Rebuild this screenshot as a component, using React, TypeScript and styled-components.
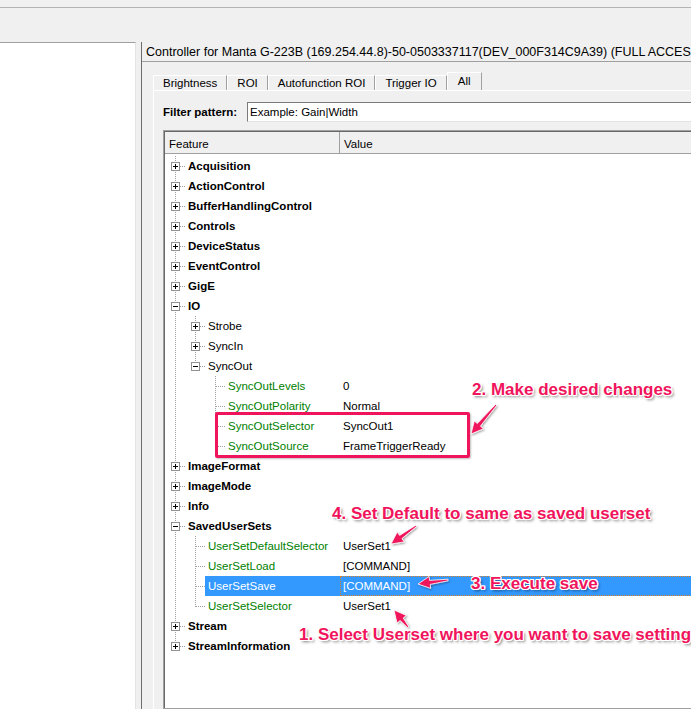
import React from 'react';
import styled, { createGlobalStyle, css } from 'styled-components';

const GlobalStyle = createGlobalStyle`
  html, body { margin: 0; padding: 0; background: #f0f0f0; overflow: hidden; }
  * { box-sizing: border-box; }
`;

const Window = styled.div`
  position: relative;
  width: 100vw;
  height: 100vh;
  overflow: hidden;
  display: flex;
  flex-direction: column;
  background: #f0f0f0;
  font-family: "Liberation Sans", Arial, sans-serif;
  font-size: 11.5px;
  color: #000;
`;

const TopStrip = styled.div`
  flex: none;
  height: 8px;
  border-bottom: 1px solid #b4b4b4;
`;

const Toolbar = styled.div`
  flex: none;
  height: 34px;
`;

const Main = styled.div`
  flex: 1;
  min-height: 0;
  display: flex;
`;

const LeftPane = styled.div`
  flex: none;
  width: 136px;
  background: #fff;
  border-top: 1px solid #a0a0a0;
  border-right: 1px solid #e3e3e3;
`;

const Splitter = styled.div`
  flex: none;
  width: 5px;
`;

const RightPane = styled.div`
  flex: 1;
  min-width: 0;
  overflow: hidden;
  display: flex;
  flex-direction: column;
  border-left: 1px solid #6d6d6d;
`;

const TitleBar = styled.div`
  flex: none;
  height: 20px;
  display: flex;
  align-items: center;
  padding-left: 4px;
  font-size: 12.5px;
  white-space: nowrap;
  border-bottom: 1px solid #a0a0a0;
`;

const TabStrip = styled.div`
  flex: none;
  display: flex;
  align-items: flex-end;
  height: 18px;
  margin: 10px 0 0 11px;
`;

const Tab = styled.div<{ $active?: boolean }>`
  display: flex;
  align-items: center;
  padding: 0 9px;
  white-space: nowrap;
  border-left: 1px solid #fff;
  border-top: 1px solid #fff;
  border-right: 1px solid #a0a0a0;
  height: 15px;
  ${(p) =>
    p.$active &&
    css`
      height: 18px;
      padding: 0 10px 2px;
      background: #f0f0f0;
    `}
`;

const TabPanel = styled.div`
  flex: 1;
  width: 560px;
  margin-left: 11px;
  display: flex;
  flex-direction: column;
  border-top: 1px solid #fff;
  border-left: 1px solid #fff;
  padding: 11px 0 0 9px;
`;

const FilterRow = styled.div`
  flex: none;
  display: flex;
  align-items: center;
  height: 20px;
`;

const FilterLabel = styled.label`
  flex: none;
  width: 84px;
  font-weight: bold;
`;

const FilterInput = styled.input`
  flex: 1;
  height: 20px;
  margin: 0;
  padding: 0 0 0 2px;
  font: inherit;
  color: #000;
  background: #fff;
  border-top: 1px solid #7a7a7a;
  border-left: 1px solid #7a7a7a;
  border-right: 1px solid #e3e3e3;
  border-bottom: 1px solid #e3e3e3;
  outline: none;
`;

const TreeView = styled.div`
  flex: 1;
  margin-top: 8px;
  border: 1px solid #a0a0a0;
  background: #fff;
  display: flex;
  flex-direction: column;
`;

const TreeInner = styled.div`
  flex: 1;
  border-top: 1px solid #696969;
  border-left: 1px solid #696969;
  display: flex;
  flex-direction: column;
`;

const Header = styled.div`
  flex: none;
  display: flex;
  height: 22px;
  background: #f0f0f0;
  border-bottom: 1px solid #a0a0a0;
`;

const HeaderCell = styled.div<{ $w?: number }>`
  display: flex;
  align-items: center;
  padding: 2px 0 0 4px;
  ${(p) => (p.$w ? css`width: ${p.$w}px; flex: none; border-right: 1px solid #a0a0a0;` : css`flex: 1;`)}
`;

const Body = styled.div`
  padding-top: 2px;
`;

const Row = styled.div`
  display: flex;
  height: 20px;
`;

const FeatureCell = styled.div`
  flex: none;
  width: 175px;
  display: flex;
  overflow: hidden;
  white-space: nowrap;
`;

const Label = styled.div<{ $variant: 'root' | 'group' | 'feature'; $selected?: boolean }>`
  flex: 1;
  min-width: 0;
  display: flex;
  align-items: center;
  padding: 0 3px;
  font-weight: ${(p) => (p.$variant === 'root' ? 'bold' : 'normal')};
  color: ${(p) => (p.$variant === 'feature' ? '#008000' : '#000')};
  ${(p) =>
    p.$selected &&
    css`
      background: #3399ff;
      color: #fff;
    `}
`;

const ValueCell = styled.div<{ $selected?: boolean }>`
  flex: 1;
  display: flex;
  align-items: center;
  padding-left: 3px;
  white-space: nowrap;
  ${(p) =>
    p.$selected &&
    css`
      background: #3399ff;
      color: #fff;
      outline: 1px dotted #d9822b;
      outline-offset: -1px;
    `}
`;

const Guides = styled.svg`
  flex: none;
  display: block;
`;

const Overlay = styled.svg`
  position: absolute;
  left: 0;
  top: 0;
  width: 100%;
  height: 100%;
  pointer-events: none;
`;

const HighlightBox = styled.div`
  position: absolute;
  left: 215px;
  top: 412px;
  width: 255px;
  height: 46px;
  border: 3px solid #f0145c;
  border-radius: 2px;
  box-shadow: 1px 1px 2px rgba(0, 0, 0, 0.25);
  pointer-events: none;
`;

const Note = styled.div<{ $x: number; $y: number }>`
  position: absolute;
  left: ${(p) => p.$x}px;
  top: ${(p) => p.$y}px;
  font-family: "Liberation Sans", Arial, sans-serif;
  font-weight: bold;
  font-size: 17px;
  line-height: 20px;
  white-space: nowrap;
  color: #f0145c;
  text-shadow: -1px -1px 0 #fff, 1px -1px 0 #fff, -1px 1px 0 #fff, 1px 1px 0 #fff, 0 -1px 0 #fff,
    0 1px 0 #fff, -1px 0 0 #fff, 1px 0 0 #fff, 2px 2px 3px rgba(0, 0, 0, 0.55);
`;

type TNode = {
  name: string;
  value?: string;
  collapsed?: boolean;
  children?: TNode[];
  selected?: boolean;
};

const tree: TNode[] = [
  { name: 'Acquisition', collapsed: true },
  { name: 'ActionControl', collapsed: true },
  { name: 'BufferHandlingControl', collapsed: true },
  { name: 'Controls', collapsed: true },
  { name: 'DeviceStatus', collapsed: true },
  { name: 'EventControl', collapsed: true },
  { name: 'GigE', collapsed: true },
  {
    name: 'IO',
    children: [
      { name: 'Strobe', collapsed: true },
      { name: 'SyncIn', collapsed: true },
      {
        name: 'SyncOut',
        children: [
          { name: 'SyncOutLevels', value: '0' },
          { name: 'SyncOutPolarity', value: 'Normal' },
          { name: 'SyncOutSelector', value: 'SyncOut1' },
          { name: 'SyncOutSource', value: 'FrameTriggerReady' },
        ],
      },
    ],
  },
  { name: 'ImageFormat', collapsed: true },
  { name: 'ImageMode', collapsed: true },
  { name: 'Info', collapsed: true },
  {
    name: 'SavedUserSets',
    children: [
      { name: 'UserSetDefaultSelector', value: 'UserSet1' },
      { name: 'UserSetLoad', value: '[COMMAND]' },
      { name: 'UserSetSave', value: '[COMMAND]', selected: true },
      { name: 'UserSetSelector', value: 'UserSet1' },
    ],
  },
  { name: 'Stream', collapsed: true },
  { name: 'StreamInformation', collapsed: true },
];

type FlatRow = { node: TNode; depth: number; ancestors: boolean[]; hasNext: boolean };

function flatten(nodes: TNode[], depth: number, ancestors: boolean[]): FlatRow[] {
  const out: FlatRow[] = [];
  nodes.forEach((node, i) => {
    const hasNext = i < nodes.length - 1;
    out.push({ node, depth, ancestors, hasNext });
    if (node.children) out.push(...flatten(node.children, depth + 1, [...ancestors, hasNext]));
  });
  return out;
}

const LINE = '#a0a0a0';

function TreeGuides({ row }: { row: FlatRow }) {
  const w = 20 * (row.depth + 1);
  const cx = 20 * row.depth + 10.5;
  const expandable = !!row.node.collapsed || !!row.node.children;
  return (
    <Guides width={w} height={20} shapeRendering="crispEdges">
      {row.ancestors.map((has, k) =>
        has ? (
          <line key={k} x1={20 * k + 10.5} y1={0} x2={20 * k + 10.5} y2={20} stroke={LINE} strokeDasharray="1 1" />
        ) : null
      )}
      <line x1={cx} y1={0} x2={cx} y2={row.hasNext ? 20 : 11} stroke={LINE} strokeDasharray="1 1" />
      <line x1={expandable ? cx + 4.5 : cx + 0.5} y1={10.5} x2={w} y2={10.5} stroke={LINE} strokeDasharray="1 1" />
      {expandable && (
        <g>
          <rect x={cx - 4} y={6.5} width={8} height={8} fill="#fff" stroke="#919191" />
          <line x1={cx - 2.5} y1={10.5} x2={cx + 2.5} y2={10.5} stroke="#000" />
          {row.node.collapsed && <line x1={cx} y1={8} x2={cx} y2={13} stroke="#000" />}
        </g>
      )}
    </Guides>
  );
}

function arrowPoints(x1: number, y1: number, x2: number, y2: number) {
  const dx = x2 - x1;
  const dy = y2 - y1;
  const L = Math.hypot(dx, dy);
  const ux = dx / L;
  const uy = dy / L;
  const px = -uy;
  const py = ux;
  const head = 12;
  const hw = 6;
  const tw = 0.8;
  const sw = 2;
  const bx = x2 - ux * head;
  const by = y2 - uy * head;
  const pts = [
    [x1 + px * tw, y1 + py * tw],
    [bx + px * sw, by + py * sw],
    [bx + px * hw, by + py * hw],
    [x2, y2],
    [bx - px * hw, by - py * hw],
    [bx - px * sw, by - py * sw],
    [x1 - px * tw, y1 - py * tw],
  ];
  return pts.map((p) => `${p[0].toFixed(1)},${p[1].toFixed(1)}`).join(' ');
}

const arrows: [number, number, number, number][] = [
  [496, 405, 471, 434],
  [416, 526, 391, 544],
  [448, 580, 418, 584],
  [408, 627, 394, 610],
];

export default function App() {
  const rows = flatten(tree, 0, []);
  return (
    <>
      <GlobalStyle />
      <Window>
        <TopStrip />
        <Toolbar />
        <Main>
          <LeftPane />
          <Splitter />
          <RightPane>
            <TitleBar>Controller for Manta G-223B (169.254.44.8)-50-0503337117(DEV_000F314C9A39) (FULL ACCESS)</TitleBar>
            <TabStrip>
              <Tab>Brightness</Tab>
              <Tab>ROI</Tab>
              <Tab>Autofunction ROI</Tab>
              <Tab>Trigger IO</Tab>
              <Tab $active>All</Tab>
            </TabStrip>
            <TabPanel>
              <FilterRow>
                <FilterLabel>Filter pattern:</FilterLabel>
                <FilterInput readOnly value="Example: Gain|Width" />
              </FilterRow>
              <TreeView>
                <TreeInner>
                  <Header>
                    <HeaderCell $w={175}>Feature</HeaderCell>
                    <HeaderCell>Value</HeaderCell>
                  </Header>
                  <Body>
                    {rows.map((r, i) => {
                      const variant: 'root' | 'group' | 'feature' =
                        r.depth === 0 ? 'root' : r.node.value !== undefined ? 'feature' : 'group';
                      return (
                        <Row key={i}>
                          <FeatureCell>
                            <TreeGuides row={r} />
                            <Label $variant={variant} $selected={r.node.selected}>
                              {r.node.name}
                            </Label>
                          </FeatureCell>
                          <ValueCell $selected={r.node.selected}>{r.node.value}</ValueCell>
                        </Row>
                      );
                    })}
                  </Body>
                </TreeInner>
              </TreeView>
            </TabPanel>
          </RightPane>
        </Main>

        <HighlightBox />
        <Overlay>
          <defs>
            <filter id="arrowShadow" x="-50%" y="-50%" width="200%" height="200%">
              <feDropShadow dx="1" dy="1" stdDeviation="1" floodColor="#000" floodOpacity="0.4" />
            </filter>
          </defs>
          {arrows.map((a, i) => (
            <polygon
              key={i}
              points={arrowPoints(a[0], a[1], a[2], a[3])}
              fill="#f0145c"
              stroke="#fff"
              strokeWidth={0.8}
              strokeLinejoin="round"
              filter="url(#arrowShadow)"
            />
          ))}
        </Overlay>
        <Note $x={472} $y={380}>2. Make desired changes</Note>
        <Note $x={332} $y={504}>4. Set Default to same as saved userset</Note>
        <Note $x={471} $y={574}>3. Execute save</Note>
        <Note $x={299} $y={625}>1. Select Userset where you want to save settings</Note>
      </Window>
    </>
  );
}
